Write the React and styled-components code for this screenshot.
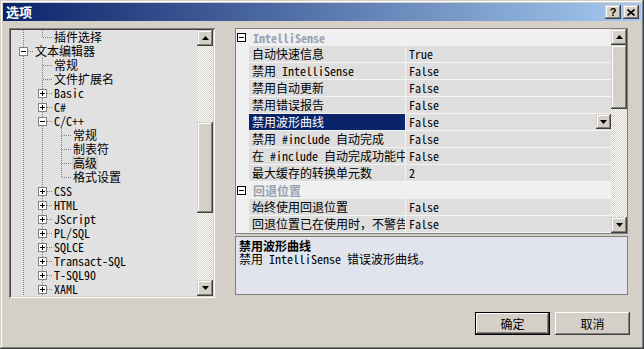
import React from 'react';
import styled, { createGlobalStyle, css } from 'styled-components';

const UI_FONT = `"Noto Sans Mono CJK SC", "Noto Sans CJK SC", sans-serif`;

const GlobalStyle = createGlobalStyle`
  html, body {
    margin: 0;
    padding: 0;
    background: #d4d0c8;
  }
  body {
    font-family: ${UI_FONT};
    font-size: 12px;
    color: #000;
  }
  * {
    box-sizing: border-box;
  }
`;

// classic 3d edges
const raised = css`
  background: #d4d0c8;
  box-shadow: inset -1px -1px #404040, inset 1px 1px #d4d0c8,
    inset -2px -2px #808080, inset 2px 2px #fff;
`;

const dotsV = `repeating-linear-gradient(to bottom, #808080 0 1px, transparent 1px 2px)`;
const dotsH = `repeating-linear-gradient(to right, #808080 0 1px, transparent 1px 2px)`;

const treeItems = [
  { level: 2, text: '插件选择', pass: [true], last: true },
  { level: 1, text: '文本编辑器', pass: [], toggle: '-' },
  { level: 2, text: '常规', pass: [true] },
  { level: 2, text: '文件扩展名', pass: [true] },
  { level: 2, text: 'Basic', pass: [true], toggle: '+' },
  { level: 2, text: 'C#', pass: [true], toggle: '+' },
  { level: 2, text: 'C/C++', pass: [true], toggle: '-' },
  { level: 3, text: '常规', pass: [true, true] },
  { level: 3, text: '制表符', pass: [true, true] },
  { level: 3, text: '高级', pass: [true, true], selected: true },
  { level: 3, text: '格式设置', pass: [true, true], last: true },
  { level: 2, text: 'CSS', pass: [true], toggle: '+' },
  { level: 2, text: 'HTML', pass: [true], toggle: '+' },
  { level: 2, text: 'JScript', pass: [true], toggle: '+' },
  { level: 2, text: 'PL/SQL', pass: [true], toggle: '+' },
  { level: 2, text: 'SQLCE', pass: [true], toggle: '+' },
  { level: 2, text: 'Transact-SQL', pass: [true], toggle: '+' },
  { level: 2, text: 'T-SQL90', pass: [true], toggle: '+' },
  { level: 2, text: 'XAML', pass: [true], toggle: '+' },
  { level: 2, text: 'XML', pass: [true], toggle: '+' },
];

const gridSections = [
  {
    title: 'IntelliSense',
    rows: [
      ['自动快速信息', 'True'],
      ['禁用 IntelliSense', 'False'],
      ['禁用自动更新', 'False'],
      ['禁用错误报告', 'False'],
      ['禁用波形曲线', 'False', true],
      ['禁用 #include 自动完成', 'False'],
      ['在 #include 自动完成功能中显示', 'False'],
      ['最大缓存的转换单元数', '2'],
    ],
  },
  {
    title: '回退位置',
    rows: [
      ['始终使用回退位置', 'False'],
      ['回退位置已在使用时，不警告', 'False'],
    ],
  },
];

const Window = styled.div`
  width: 644px;
  height: 349px;
  padding: 3px;
  display: flex;
  flex-direction: column;
  ${raised};
`;

const TitleBar = styled.div`
  height: 18px;
  display: flex;
  align-items: center;
  padding: 0 2px 0 3px;
  background: linear-gradient(to right, #0a246a, #a6caf0);
`;

const Title = styled.span`
  color: #fff;
  font-weight: bold;
  font-size: 13px;
  line-height: 18px;
`;

const Controls = styled.div`
  margin-left: auto;
  display: flex;
  gap: 2px;
`;

const CaptionButton = styled.div`
  width: 16px;
  height: 14px;
  display: flex;
  align-items: center;
  justify-content: center;
  font-family: 'Liberation Sans', sans-serif;
  font-weight: bold;
  font-size: 11px;
  line-height: 14px;
  ${raised};
`;

const Main = styled.div`
  display: flex;
  gap: 20px;
  margin-top: 7px;
  padding-left: 6px;
`;

const TreePanel = styled.div`
  width: 206px;
  height: 270px;
  padding: 2px;
  display: flex;
  background: #e1e1e1;
  box-shadow: inset 1px 1px #808080, inset -1px -1px #fff,
    inset 2px 2px #404040, inset -2px -2px #d4d0c8;
`;

const TreeView = styled.div`
  flex: 1;
  overflow: hidden;
`;

const TreeList = styled.div`
  padding-left: 3px;
`;

const TreeRow = styled.div`
  height: 14px;
  display: flex;
  white-space: nowrap;
`;

const IndentCell = styled.div`
  position: relative;
  width: 19px;
  flex: none;
  &::before {
    content: '';
    display: ${(p) => (p.$line ? 'block' : 'none')};
    position: absolute;
    left: 9px;
    top: 0;
    width: 1px;
    height: 100%;
    background: ${dotsV};
  }
`;

const OwnCell = styled.div`
  position: relative;
  width: 19px;
  flex: none;
  &::before {
    content: '';
    position: absolute;
    left: 9px;
    top: 0;
    width: 1px;
    height: ${(p) => (p.$last ? '8px' : '100%')};
    background: ${dotsV};
  }
  &::after {
    content: '';
    position: absolute;
    left: 10px;
    top: 7px;
    width: 9px;
    height: 1px;
    background: ${dotsH};
  }
`;

const Toggle = styled.div`
  position: absolute;
  z-index: 1;
  left: 5px;
  top: 3px;
  width: 9px;
  height: 9px;
  border: 1px solid #808080;
  background: #fff;
  &::before {
    content: '';
    position: absolute;
    left: 1px;
    top: 3px;
    width: 5px;
    height: 1px;
    background: #000;
  }
  &::after {
    content: '';
    display: ${(p) => (p.$open ? 'none' : 'block')};
    position: absolute;
    left: 3px;
    top: 1px;
    width: 1px;
    height: 5px;
    background: #000;
  }
`;

const TreeLabel = styled.span`
  display: inline-block;
  height: 14px;
  margin-left: 1px;
  padding: 0 1px;
  line-height: 14px;
  background: ${(p) => (p.$selected ? '#d4d0c8' : 'transparent')};
`;

const ScrollBar = styled.div`
  width: 16px;
  flex: none;
  display: flex;
  flex-direction: column;
`;

const ScrollButton = styled.div`
  width: 16px;
  height: 16px;
  flex: none;
  display: flex;
  align-items: center;
  justify-content: center;
  ${raised};
`;

const Track = styled.div`
  flex: ${(p) => (p.$size != null ? `0 0 ${p.$size}px` : '1')};
  background: repeating-conic-gradient(#d4d0c8 0 25%, #fff 0 50%) 0 0 / 2px 2px;
`;

const Thumb = styled.div`
  flex: 0 0 ${(p) => p.$size}px;
  ${raised};
`;

const RightColumn = styled.div`
  width: 393px;
  display: flex;
  flex-direction: column;
  gap: 2px;
`;

const Grid = styled.div`
  height: 206px;
  display: flex;
  border: 1px solid #808080;
  background: #f0f0f0;
`;

const GridRows = styled.div`
  flex: 1;
  overflow: hidden;
`;

const CategoryRow = styled.div`
  height: 17px;
  display: flex;
  align-items: center;
`;

const CategoryToggle = styled.div`
  position: relative;
  width: 9px;
  height: 9px;
  margin: 0 4px 0 1px;
  border: 1px solid #000;
  background: #fff;
  &::before {
    content: '';
    position: absolute;
    left: 1px;
    top: 3px;
    width: 5px;
    height: 1px;
    background: #000;
  }
`;

const CategoryTitle = styled.span`
  margin-left: 3px;
  font-weight: bold;
  color: #99a1b2;
  line-height: 16px;
`;

const PropRow = styled.div`
  height: 17px;
  display: grid;
  grid-template-columns: 13px 157px 1fr;
`;

const NameCell = styled.div`
  padding-left: 3px;
  line-height: 16px;
  overflow: hidden;
  white-space: nowrap;
  border-bottom: 1px solid #f4f4f4;
  border-right: 1px solid #f4f4f4;
  background: ${(p) => (p.$selected ? '#0a246a' : '#dedede')};
  color: ${(p) => (p.$selected ? '#fff' : '#000')};
`;

const ValueCell = styled.div`
  display: flex;
  align-items: flex-start;
  padding-left: 3px;
  line-height: 16px;
  white-space: nowrap;
  border-bottom: 1px solid #f4f4f4;
  background: #dedede;
`;

const DropButton = styled.div`
  margin-left: auto;
  width: 15px;
  height: 15px;
  display: flex;
  align-items: center;
  justify-content: center;
  ${raised};
`;

const Description = styled.div`
  height: 59px;
  padding: 2px 3px;
  border: 1px solid #808080;
  background: #e1e4ec;
  line-height: 13px;
`;

const DescLine = styled.div`
  font-weight: ${(p) => (p.$bold ? 'bold' : 'normal')};
`;

const Footer = styled.div`
  display: flex;
  justify-content: flex-end;
  gap: 5px;
  margin-top: 14px;
  padding-right: 11px;
`;

const PushButton = styled.div`
  width: 75px;
  height: 23px;
  display: flex;
  align-items: center;
  justify-content: center;
  background: #d4d0c8;
  box-shadow: inset -1px -1px #404040, inset 1px 1px #fff,
    inset -2px -2px #808080, inset 2px 2px #d4d0c8;
  border: ${(p) => (p.$default ? '1px solid #000' : 'none')};
`;

const Arrow = ({ down }) => (
  <svg width="7" height="4" viewBox="0 0 7 4">
    <polygon points={down ? '0,0 7,0 3.5,4' : '3.5,0 7,4 0,4'} fill="#000" />
  </svg>
);

const CloseGlyph = () => (
  <svg width="8" height="7" viewBox="0 0 8 7">
    <path d="M0.5 0.5 L7.5 6.5 M7.5 0.5 L0.5 6.5" stroke="#000" strokeWidth="1.6" />
  </svg>
);

const VScroll = ({ before, thumb }) => (
  <ScrollBar>
    <ScrollButton>
      <Arrow />
    </ScrollButton>
    <Track $size={before} />
    <Thumb $size={thumb} />
    <Track />
    <ScrollButton>
      <Arrow down />
    </ScrollButton>
  </ScrollBar>
);

const TreeItem = ({ item }) => (
  <TreeRow>
    {item.pass.map((line, i) => (
      <IndentCell key={i} $line={line} />
    ))}
    <OwnCell $last={item.last}>
      {item.toggle && <Toggle $open={item.toggle === '-'} />}
    </OwnCell>
    <TreeLabel $selected={item.selected}>{item.text}</TreeLabel>
  </TreeRow>
);

export default function App() {
  return (
    <>
      <GlobalStyle />
      <Window>
        <TitleBar>
          <Title>选项</Title>
          <Controls>
            <CaptionButton>?</CaptionButton>
            <CaptionButton>
              <CloseGlyph />
            </CaptionButton>
          </Controls>
        </TitleBar>

        <Main>
          <TreePanel>
            <TreeView>
              <TreeList>
                {treeItems.map((item, i) => (
                  <TreeItem key={i} item={item} />
                ))}
              </TreeList>
            </TreeView>
            <VScroll before={76} thumb={91} />
          </TreePanel>

          <RightColumn>
            <Grid>
              <GridRows>
                {gridSections.map((section) => (
                  <React.Fragment key={section.title}>
                    <CategoryRow>
                      <CategoryToggle />
                      <CategoryTitle>{section.title}</CategoryTitle>
                    </CategoryRow>
                    {section.rows.map(([name, value, selected]) => (
                      <PropRow key={name}>
                        <span />
                        <NameCell $selected={selected}>{name}</NameCell>
                        <ValueCell>
                          {value}
                          {selected && (
                            <DropButton>
                              <Arrow down />
                            </DropButton>
                          )}
                        </ValueCell>
                      </PropRow>
                    ))}
                  </React.Fragment>
                ))}
              </GridRows>
              <VScroll before={0} thumb={64} />
            </Grid>
            <Description>
              <DescLine $bold>禁用波形曲线</DescLine>
              <DescLine>禁用 IntelliSense 错误波形曲线。</DescLine>
            </Description>
          </RightColumn>
        </Main>

        <Footer>
          <PushButton $default>确定</PushButton>
          <PushButton>取消</PushButton>
        </Footer>
      </Window>
    </>
  );
}
